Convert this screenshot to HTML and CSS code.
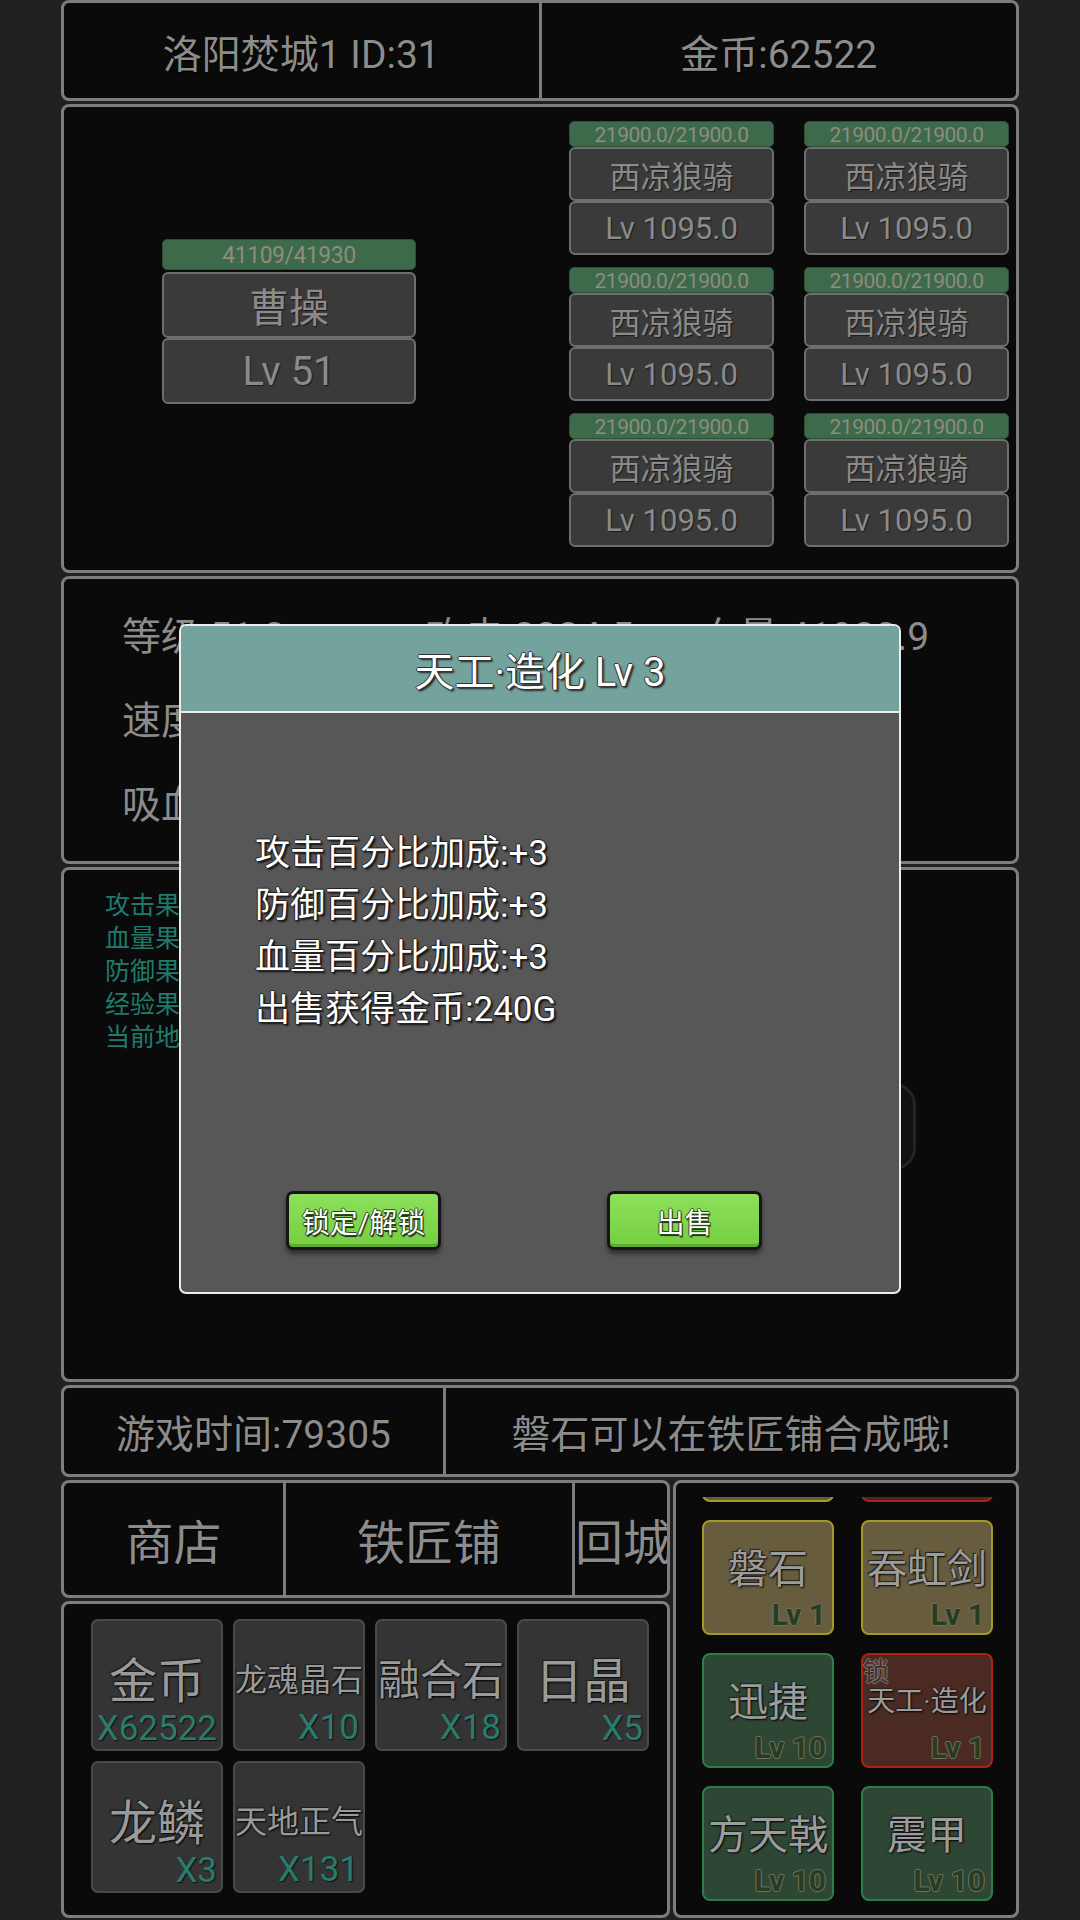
FILE: index.html
```html
<!DOCTYPE html>
<html lang="zh-CN">
<head>
    <meta charset="UTF-8">
    <meta name="viewport" content="width=device-width, initial-scale=1.0">
    <title>洛阳焚城</title>
    <link rel="stylesheet" href="styles.css">
</head>
<body>
    <div class="screen">
        <div class="bar top-bar">
            <div class="cell">洛阳焚城1 ID:31</div>
            <div class="cell">金币:62522</div>
        </div>

        <div class="panel battle">
            <div class="hero-side">
                <div class="unit hero">
                    <div class="hp">41109/41930</div>
                    <div class="box">曹操</div>
                    <div class="box">Lv 51</div>
                </div>
            </div>
            <div class="enemy-grid">
                <div class="unit"><div class="hp">21900.0/21900.0</div><div class="box">西凉狼骑</div><div class="box">Lv 1095.0</div></div>
                <div class="unit"><div class="hp">21900.0/21900.0</div><div class="box">西凉狼骑</div><div class="box">Lv 1095.0</div></div>
                <div class="unit"><div class="hp">21900.0/21900.0</div><div class="box">西凉狼骑</div><div class="box">Lv 1095.0</div></div>
                <div class="unit"><div class="hp">21900.0/21900.0</div><div class="box">西凉狼骑</div><div class="box">Lv 1095.0</div></div>
                <div class="unit"><div class="hp">21900.0/21900.0</div><div class="box">西凉狼骑</div><div class="box">Lv 1095.0</div></div>
                <div class="unit"><div class="hp">21900.0/21900.0</div><div class="box">西凉狼骑</div><div class="box">Lv 1095.0</div></div>
            </div>
        </div>

        <div class="panel stats">
            <div>等级:51.0</div><div>攻击:3384.5</div><div>血量:41930.9</div>
            <div>速度:1.0</div><div>防御:1520.0</div><div>暴击:5.0</div>
            <div>吸血:0.0</div><div>闪避:3.0</div><div>经验:0</div>
        </div>

        <div class="panel log">
            <div class="log-lines">
                <div>攻击果实:0</div>
                <div>血量果实:0</div>
                <div>防御果实:0</div>
                <div>经验果实:0</div>
                <div>当前地图:洛阳焚城1</div>
            </div>
            <div class="dark-btn"></div>
        </div>

        <div class="bar info-bar">
            <div class="cell">游戏时间:79305</div>
            <div class="cell">磐石可以在铁匠铺合成哦!</div>
        </div>

        <div class="bottom">
            <div class="left-col">
                <div class="bar nav">
                    <div class="cell shop">商店</div>
                    <div class="cell smith">铁匠铺</div>
                    <div class="cell home">回城</div>
                </div>
                <div class="panel bag">
                    <div class="item"><div class="name n2">金币</div><div class="count">X62522</div></div>
                    <div class="item"><div class="name n4">龙魂晶石</div><div class="count">X10</div></div>
                    <div class="item"><div class="name n3">融合石</div><div class="count">X18</div></div>
                    <div class="item"><div class="name n2">日晶</div><div class="count">X5</div></div>
                    <div class="item"><div class="name n2">龙鳞</div><div class="count">X3</div></div>
                    <div class="item"><div class="name n4">天地正气</div><div class="count">X131</div></div>
                </div>
            </div>
            <div class="panel equip">
                <div class="equip-view">
                    <div class="equip-grid">
                        <div class="gear yellow"></div>
                        <div class="gear red"></div>
                        <div class="gear yellow"><div class="gname">磐石</div><div class="lv">Lv 1</div></div>
                        <div class="gear yellow"><div class="gname">吞虹剑</div><div class="lv">Lv 1</div></div>
                        <div class="gear green"><div class="gname">迅捷</div><div class="lv">Lv 10</div></div>
                        <div class="gear red"><span class="lock">锁</span><div class="gname small">天工·造化</div><div class="lv">Lv 1</div></div>
                        <div class="gear green"><div class="gname">方天戟</div><div class="lv">Lv 10</div></div>
                        <div class="gear green"><div class="gname">震甲</div><div class="lv">Lv 10</div></div>
                    </div>
                </div>
            </div>
        </div>

        <div class="modal">
            <div class="modal-title">天工·造化 Lv 3</div>
            <div class="modal-body">
                <div class="attr">攻击百分比加成:+3</div>
                <div class="attr">防御百分比加成:+3</div>
                <div class="attr">血量百分比加成:+3</div>
                <div class="attr">出售获得金币:240G</div>
                <div class="actions">
                    <button class="green-btn">锁定/解锁</button>
                    <button class="green-btn">出售</button>
                </div>
            </div>
        </div>
    </div>
</body>
</html>
```

FILE: styles.css
```css
body {
    margin: 0;
    background: #202020;
    font-family: "Roboto", "Noto Sans CJK SC", sans-serif;
    color: #8c8c8c;
}
.screen {
    position: relative;
    width: 958px;
    height: 1920px;
    margin: 0 auto;
    display: flex;
    flex-direction: column;
    gap: 3px;
}
.panel, .bar {
    box-sizing: border-box;
    border: 3px solid #7d7d7d;
    border-radius: 8px;
    background: #0a0a0a;
}
.bar {
    display: flex;
}
.bar .cell {
    display: flex;
    align-items: center;
    justify-content: center;
    white-space: nowrap;
    overflow: hidden;
    text-shadow: 1px 1px 1px #000;
}
.bar .cell + .cell {
    border-left: 3px solid #7d7d7d;
}

/* top */
.top-bar {
    height: 101px;
    font-size: 39px;
}
.top-bar .cell {
    flex: 1;
}

/* battle */
.battle {
    height: 469px;
    display: flex;
}
.hero-side {
    padding: 132px 0 0 98px;
}
.unit {
    display: flex;
    flex-direction: column;
    width: 205px;
}
.hp {
    height: 26px;
    line-height: 26px;
    box-sizing: border-box;
    background: #3c6a4b;
    border: 1px solid #2c4f37;
    border-radius: 5px;
    text-align: center;
    font-size: 21px;
    letter-spacing: -0.5px;
    color: #8e8c7e;
}
.unit .box {
    height: 54px;
    box-sizing: border-box;
    background: #3a3a3a;
    border: 2px solid #6e6e6e;
    border-radius: 6px;
    display: flex;
    align-items: center;
    justify-content: center;
    font-size: 31px;
    color: #8a8a8a;
    text-shadow: 1px 1px 1px #1a1a1a;
}
.hero {
    width: 254px;
}
.hero .hp {
    height: 31px;
    line-height: 31px;
    font-size: 23px;
    margin-bottom: 2px;
}
.hero .box {
    height: 66px;
    font-size: 40px;
}
.enemy-grid {
    margin: 14px 0 0 153px;
    display: grid;
    grid-template-columns: 205px 205px;
    column-gap: 30px;
    row-gap: 12px;
    align-content: start;
}

/* stats */
.stats {
    height: 288px;
    display: grid;
    grid-template-columns: 304px 274px auto;
    grid-auto-rows: 84px;
    align-items: center;
    padding: 12px 0 0 58px;
    font-size: 39px;
    white-space: nowrap;
}

/* log */
.log {
    height: 515px;
    display: flex;
    justify-content: space-between;
    align-items: flex-start;
    padding: 19px 0 0 41px;
}
.log-lines {
    font-size: 25px;
    line-height: 33px;
    color: #1f7a6c;
}
.dark-btn {
    width: 152px;
    height: 87px;
    margin: 194px 100px 0 0;
    box-sizing: border-box;
    background: #121212;
    border: 3px solid #242424;
    border-radius: 22px;
}

/* info */
.info-bar {
    height: 92px;
    font-size: 39px;
}
.info-bar .cell:first-child {
    width: 379px;
}
.info-bar .cell:last-child {
    flex: 1;
}

/* bottom area */
.bottom {
    height: 438px;
    display: flex;
    gap: 3px;
}
.left-col {
    width: 609px;
    display: flex;
    flex-direction: column;
    gap: 3px;
}
.nav {
    height: 118px;
    font-size: 48px;
}
.nav .shop { width: 219px; }
.nav .smith { width: 286px; }
.nav .home { flex: 1; justify-content: flex-start; }

.bag {
    flex: 1;
    display: grid;
    grid-template-columns: repeat(4, 132px);
    grid-auto-rows: 132px;
    gap: 10px;
    align-content: start;
    padding: 15px 0 0 27px;
}
.item {
    box-sizing: border-box;
    background: #343434;
    border: 2px solid #4a4a4a;
    border-radius: 7px;
    display: flex;
    flex-direction: column;
    padding-top: 25px;
    overflow: hidden;
}
.item .name {
    height: 62px;
    display: flex;
    align-items: center;
    justify-content: center;
    white-space: nowrap;
    color: #9a9a9a;
    text-shadow: 1px 1px 2px #000, -1px -1px 1px #1c1c1c;
}
.n2 { font-size: 48px; }
.n3 { font-size: 42px; }
.n4 { font-size: 32px; }
.item .count {
    text-align: right;
    padding-right: 4px;
    font-size: 35px;
    line-height: 42px;
    color: #2a7b6d;
    text-shadow: 1px 1px 1px #111;
}

.equip {
    flex: 1;
    padding: 14px 0 0 26px;
    display: flex;
    flex-direction: column;
}
.equip-view {
    flex: 1;
    overflow: hidden;
}
.equip-grid {
    margin-top: -110px;
    display: grid;
    grid-template-columns: 132px 132px;
    grid-auto-rows: 115px;
    column-gap: 27px;
    row-gap: 18px;
}
.gear {
    position: relative;
    box-sizing: border-box;
    border: 2px solid;
    border-radius: 8px;
    padding-top: 17px;
}
.gear.yellow { background: #675d3e; border-color: #a49a22; }
.gear.green { background: #2e4634; border-color: #2d7d47; }
.gear.red { background: #4a2a22; border-color: #a82514; }
.gname {
    height: 54px;
    display: flex;
    align-items: center;
    justify-content: center;
    white-space: nowrap;
    font-size: 40px;
    color: #9c9c9c;
    text-shadow: 1px 1px 2px #000, -1px -1px 1px #222;
}
.gname.small {
    font-size: 28px;
}
.lv {
    margin-top: 5px;
    text-align: right;
    padding-right: 6px;
    font-size: 30px;
    font-weight: 700;
    line-height: 34px;
    color: #2a3c20;
    text-shadow: -1px 0 #707060, 1px 0 #707060, 0 -1px #707060, 0 1px #707060;
}
.lock {
    position: absolute;
    left: 0;
    top: -4px;
    font-size: 26px;
    color: #4a2a22;
    text-shadow: -1px 0 #777, 1px 0 #777, 0 -1px #777, 0 1px #777;
}

/* dialog */
.modal {
    position: absolute;
    left: 118px;
    top: 624px;
    width: 722px;
    height: 670px;
    box-sizing: border-box;
    background: #575757;
    border: 2px solid #ececec;
    border-radius: 7px;
    overflow: hidden;
}
.modal-title {
    height: 87px;
    box-sizing: border-box;
    background: #74a39e;
    border-bottom: 2px solid #ececec;
    display: flex;
    align-items: center;
    justify-content: center;
    font-size: 40px;
    color: #fff;
    text-shadow: -1px 0 #333, 1px 0 #333, 0 -1px #333, 0 1px #333, 2px 2px 2px #222;
}
.modal-body {
    padding: 115px 0 0 74px;
}
.attr {
    font-size: 35px;
    line-height: 52px;
    color: #fff;
    text-shadow: -1px 0 #222, 1px 0 #222, 0 -1px #222, 0 1px #222, 2px 2px 2px #111;
}
.actions {
    display: flex;
    gap: 166px;
    margin: 155px 0 0 31px;
}
.green-btn {
    width: 155px;
    height: 59px;
    box-sizing: border-box;
    background: linear-gradient(#8ee05a, #74cf40);
    border: 3px solid #151515;
    border-radius: 7px;
    box-shadow: inset 0 -3px 0 #5eaa32, 0 4px 4px rgba(0, 0, 0, 0.45);
    font-family: "Roboto", "Noto Sans CJK SC", sans-serif;
    font-size: 28px;
    color: #fff;
    text-shadow: -1px 0 #2b4a1a, 1px 0 #2b4a1a, 0 -1px #2b4a1a, 0 1px #2b4a1a, 1px 2px 1px #222;
    padding: 0;
}
```
